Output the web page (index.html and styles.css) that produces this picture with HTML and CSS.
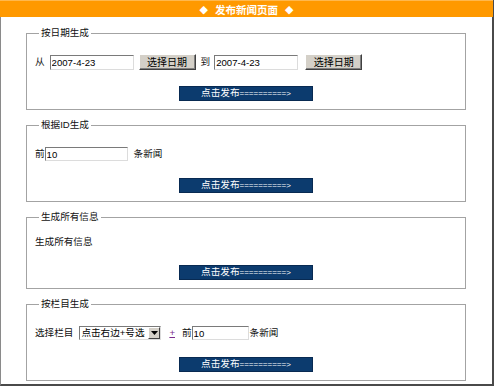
FILE: index.html
```html
<!DOCTYPE html>
<html lang="zh-CN">
<head>
  <meta charset="UTF-8" />
  <title>发布新闻页面</title>
  <link rel="stylesheet" href="styles.css">
</head>
<body>
  <div class="page">
    <div class="title">
      <span class="dia">◆</span><span class="title-text">发布新闻页面</span><span class="dia">◆</span>
    </div>

    <!-- by date -->
    <fieldset class="box first">
      <legend>按日期生成</legend>
      <div class="row">
        <span class="lbl">从</span>
        <input class="txt date from" type="text" value="2007-4-23">
        <button class="btn-pick" type="button">选择日期</button>
        <span class="lbl to">到</span>
        <input class="txt date to-date" type="text" value="2007-4-23">
        <button class="btn-pick last" type="button">选择日期</button>
      </div>
      <div class="act"><button class="btn-go" type="button">点击发布<span class="arrow">==========&gt;</span></button></div>
    </fieldset>

    <!-- by id -->
    <fieldset class="box">
      <legend>根据ID生成</legend>
      <div class="row">
        <span class="lbl">前</span>
        <input class="txt count" type="text" value="10">
        <span class="lbl unit">条新闻</span>
      </div>
      <div class="act"><button class="btn-go" type="button">点击发布<span class="arrow">==========&gt;</span></button></div>
    </fieldset>

    <!-- all -->
    <fieldset class="box all">
      <legend>生成所有信息</legend>
      <div class="row">
        <span class="lbl">生成所有信息</span>
      </div>
      <div class="act"><button class="btn-go" type="button">点击发布<span class="arrow">==========&gt;</span></button></div>
    </fieldset>

    <!-- by column -->
    <fieldset class="box">
      <legend>按栏目生成</legend>
      <div class="row">
        <span class="lbl">选择栏目</span>
        <div class="sel">
          <span class="sel-text">点击右边+号选</span>
          <span class="sel-btn">
            <svg width="7" height="4" viewBox="0 0 7 4"><path d="M0 0h7L3.5 4z" fill="#000"/></svg>
          </span>
        </div>
        <a class="plus" href="#">+</a>
        <span class="lbl pre">前</span>
        <input class="txt small" type="text" value="10">
        <span class="lbl unit2">条新闻</span>
      </div>
      <div class="act"><button class="btn-go" type="button">点击发布<span class="arrow">==========&gt;</span></button></div>
    </fieldset>
  </div>
</body>
</html>
```

FILE: styles.css
```css
:root {
  --orange: #ff9900;
  --navy: #0c3b6e;
  --face: #d4d0c8;
  --line: #a3a3a3;
  --font: "Liberation Sans", "Noto Sans CJK SC", sans-serif;
}

* {
  box-sizing: border-box;
}

body {
  margin: 0;
  background: #ffffff;
  font-family: var(--font);
  font-size: 9.6px;
  color: #111;
}

.page {
  width: 494px;
  height: 386px;
  border-left: 1px solid #8a8a8a;
  border-right: 2px solid #4a4a4a;
  border-bottom: 2px solid #4a4a4a;
  background: #fff;
}

/* Title bar */
.title {
  height: 17px;
  margin-left: -1px;
  margin-right: -1px;
  background: var(--orange);
  border-top: 1px solid #ffb84d;
  display: flex;
  align-items: center;
  justify-content: center;
  color: #fff;
  font-weight: bold;
  font-size: 10.5px;
}

.dia {
  font-family: "DejaVu Sans", sans-serif;
  font-size: 11px;
}

.title-text {
  margin: 0 7px;
}

/* Boxes */
.box {
  margin: 8px 26px 0 25px;
  padding: 0 8px 8px 8px;
  border: 1px solid var(--line);
  min-width: 0;
}

.box.first {
  margin-top: 9px;
}

.box legend {
  margin-left: 4px;
  padding: 0 2px;
  line-height: 14px;
  height: 14px;
}

.row {
  display: flex;
  align-items: center;
  height: 18px;
  margin-top: 13px;
  white-space: nowrap;
}

.box.all .row {
  margin-top: 9px;
}

.act {
  display: flex;
  justify-content: center;
  margin-top: 15px;
}

.box.all .act {
  margin-top: 14px;
}

.lbl {
  line-height: 14px;
}

.lbl.to {
  margin-left: 5px;
}

.lbl.unit {
  margin-left: 6px;
}

.lbl.pre {
  margin-left: 7px;
}

.lbl.unit2 {
  margin-left: 1px;
}

/* Inputs */
.txt {
  height: 15px;
  padding: 0 1px;
  border-top: 1px solid #7a7a7a;
  border-left: 1px solid #7a7a7a;
  border-right: 1px solid #dcdcdc;
  border-bottom: 1px solid #dcdcdc;
  font-family: var(--font);
  font-size: 9.6px;
  color: #000;
  background: #fff;
  outline: none;
}

.txt.date {
  width: 84px;
}

.txt.from {
  margin-left: 5px;
}

.txt.to-date {
  margin-left: 4px;
}

.txt.count {
  width: 83px;
  height: 14px;
}

.txt.small {
  width: 57px;
  height: 14px;
}

.btn-pick {
  width: 57px;
  height: 16px;
  margin-left: 5px;
  padding: 0;
  background: var(--face);
  border-top: 1px solid #fff;
  border-left: 1px solid #fff;
  border-right: 1px solid #404040;
  border-bottom: 1px solid #404040;
  box-shadow: inset -1px -1px #808080;
  font-family: var(--font);
  font-size: 10px;
  color: #000;
  line-height: 13px;
}

.btn-pick.last {
  margin-left: 7px;
}

/* Fake select */
.sel {
  width: 82px;
  height: 14px;
  margin-left: 6px;
  display: flex;
  align-items: stretch;
  border-top: 1px solid #7a7a7a;
  border-left: 1px solid #7a7a7a;
  border-right: 1px solid #dcdcdc;
  border-bottom: 1px solid #dcdcdc;
  background: #fff;
}

.sel-text {
  flex: 1;
  padding-left: 1px;
  line-height: 12px;
  color: #000;
}

.sel-btn {
  width: 12px;
  display: flex;
  align-items: center;
  justify-content: center;
  background: var(--face);
  border-top: 1px solid #fff;
  border-left: 1px solid #fff;
  border-right: 1px solid #404040;
  border-bottom: 1px solid #404040;
}

.plus {
  margin-left: 8px;
  color: #7a2a8a;
  text-decoration: underline;
  line-height: 14px;
}

/* Publish button */
.btn-go {
  width: 134px;
  height: 15px;
  padding: 0;
  background: var(--navy);
  border: 1px solid #082a52;
  color: #fff;
  font-family: var(--font);
  font-size: 9.6px;
  line-height: 12px;
}

.arrow {
  font-size: 8px;
}
```
